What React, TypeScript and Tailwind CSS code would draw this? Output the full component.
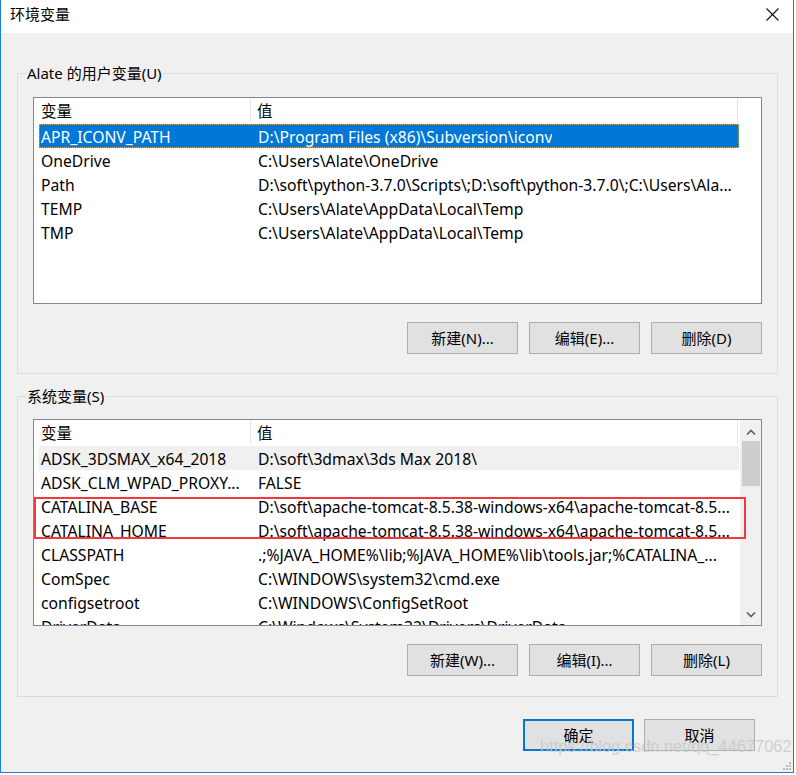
const font = { fontFamily: '"Noto Sans", "Noto Sans CJK SC", sans-serif' };

const userVars = [
  ['APR_ICONV_PATH', 'D:\\Program Files (x86)\\Subversion\\iconv'],
  ['OneDrive', 'C:\\Users\\Alate\\OneDrive'],
  ['Path', 'D:\\soft\\python-3.7.0\\Scripts\\;D:\\soft\\python-3.7.0\\;C:\\Users\\Ala...'],
  ['TEMP', 'C:\\Users\\Alate\\AppData\\Local\\Temp'],
  ['TMP', 'C:\\Users\\Alate\\AppData\\Local\\Temp'],
];

const sysVars = [
  ['ADSK_3DSMAX_x64_2018', 'D:\\soft\\3dmax\\3ds Max 2018\\'],
  ['ADSK_CLM_WPAD_PROXY...', 'FALSE'],
  ['CATALINA_BASE', 'D:\\soft\\apache-tomcat-8.5.38-windows-x64\\apache-tomcat-8.5...'],
  ['CATALINA_HOME', 'D:\\soft\\apache-tomcat-8.5.38-windows-x64\\apache-tomcat-8.5...'],
  ['CLASSPATH', '.;%JAVA_HOME%\\lib;%JAVA_HOME%\\lib\\tools.jar;%CATALINA_...'],
  ['ComSpec', 'C:\\WINDOWS\\system32\\cmd.exe'],
  ['configsetroot', 'C:\\WINDOWS\\ConfigSetRoot'],
  ['DriverData', 'C:\\Windows\\System32\\Drivers\\DriverData'],
];

function Btn({ label, primary }: { label: string; primary?: boolean }) {
  return (
    <div
      className={
        'w-[111px] h-[32px] flex items-center justify-center bg-[#e1e1e1] text-[15px] text-black ' +
        (primary ? 'border-2 border-[#0078d7]' : 'border border-[#adadad]')
      }
    >
      {label}
    </div>
  );
}

function Header({ scroll }: { scroll?: boolean }) {
  return (
    <div className="flex h-[24px] bg-white text-[15.5px] text-black">
      <div className="w-[217px] pl-[7px] pt-[4px] flex items-center border-r border-[#e5e5e5]">变量</div>
      <div className="w-[487px] pl-[6px] pt-[4px] flex items-center border-r border-[#e5e5e5]">值</div>
      {!scroll && <div className="flex-1" />}
    </div>
  );
}

function Rows({ rows, selected, hover }: { rows: string[][]; selected?: number; hover?: number }) {
  return (
    <div className="pt-[2px] pl-[5px] w-[705px]">
      {rows.map(([k, v], i) => {
        const sel = i === selected;
        const hov = i === hover;
        return (
          <div
            key={k}
            className={
              'flex h-[24px] pt-[4px] items-center text-[15.7px] whitespace-nowrap ' +
              (sel
                ? 'bg-[#0078d7] text-white outline outline-1 outline-dotted outline-[#f0a030] -outline-offset-1'
                : hov
                ? 'bg-[#f0f0f0] text-black'
                : 'text-black')
            }
          >
            <div className="w-[217px] pl-[2px] overflow-hidden">{k}</div>
            <div className="pl-[2px] overflow-hidden">{v}</div>
          </div>
        );
      })}
    </div>
  );
}

function Chevron({ up }: { up?: boolean }) {
  return (
    <svg width="10" height="6" viewBox="0 0 10 6">
      <path
        d={up ? 'M1 5.5 L5 1.5 L9 5.5' : 'M1 0.5 L5 4.5 L9 0.5'}
        fill="none"
        stroke="#606060"
        strokeWidth="1.6"
      />
    </svg>
  );
}

export default function App() {
  return (
    <div className="w-[796px] h-[775px] bg-white flex overflow-hidden" style={font}>
      <div className="w-[794px] h-[773px] flex flex-col border-l border-r border-b border-[#1b7fd6] bg-[#f0f0f0] relative">
        {/* title bar */}
        <div className="h-[33px] bg-white flex items-center justify-between pl-[9px] pr-[14px]">
          <span className="text-[15px] text-black -mt-[4px]">环境变量</span>
          <svg width="13" height="13" viewBox="0 0 13 13" className="-mt-[4px]">
            <path d="M0.5 0.5 L12.5 12.5 M12.5 0.5 L0.5 12.5" stroke="#111" strokeWidth="1.1" />
          </svg>
        </div>

        {/* user variables */}
        <fieldset className="ml-[16px] mt-[30px] w-[761px] h-[311px] border border-[#dcdcdc] pl-[15px] pr-[15px]">
          <legend className="ml-[-7px] px-[1px] text-[15px] leading-[20px] text-black">Alate 的用户变量(U)</legend>
          <div className="mt-[14px] h-[207px] border border-[#828790] bg-white">
            <div className="w-[705px]">
              <Header />
            </div>
            <Rows rows={userVars} selected={0} />
          </div>
          <div className="mt-[18px] flex justify-end gap-[11px]">
            <Btn label="新建(N)..." />
            <Btn label="编辑(E)..." />
            <Btn label="删除(D)" />
          </div>
        </fieldset>

        {/* system variables */}
        <fieldset className="ml-[16px] mt-[12px] w-[761px] h-[311px] border border-[#dcdcdc] pl-[15px] pr-[15px]">
          <legend className="ml-[-7px] px-[1px] text-[15px] leading-[20px] text-black">系统变量(S)</legend>
          <div className="mt-[13px] h-[207px] border border-[#828790] bg-white flex overflow-hidden relative">
            <div className="w-[706px] overflow-hidden">
              <Header scroll />
              <Rows rows={sysVars} hover={0} />
            </div>
            <div className="ml-auto w-[21px] bg-[#f0f0f0] flex flex-col items-center">
              <div className="h-[21px] flex items-center justify-center pt-[2px]">
                <Chevron up />
              </div>
              <div className="w-[18px] h-[45px] bg-[#cdcdcd]" />
              <div className="flex-1" />
              <div className="h-[21px] flex items-center justify-center">
                <Chevron />
              </div>
            </div>
            {/* annotation */}
            <div className="absolute left-0 top-[77px] w-[712px] h-[42px] border-2 border-[#f5383b]" />
          </div>
          <div className="mt-[18px] flex justify-end gap-[11px]">
            <Btn label="新建(W)..." />
            <Btn label="编辑(I)..." />
            <Btn label="删除(L)" />
          </div>
        </fieldset>

        {/* dialog buttons */}
        <div className="mt-[22px] flex justify-end gap-[10px] pr-[38px]">
          <Btn label="确定" primary />
          <Btn label="取消" />
        </div>

        {/* watermark */}
        <div
          className="absolute left-[539px] top-[734px] text-[16.4px] text-[#c8c8c8] opacity-80 whitespace-nowrap"
          style={{ fontFamily: '"Liberation Sans", Arial, sans-serif' }}
        >
          https://blog.csdn.net/qq_44677062
        </div>
        {/* size grip */}
        <div className="absolute right-[2px] bottom-[2px] grid grid-cols-3 gap-[1px]">
          <div className="w-[2px] h-[2px]" />
          <div className="w-[2px] h-[2px]" />
          <div className="w-[2px] h-[2px] bg-[#bcbcbc]" />
          <div className="w-[2px] h-[2px]" />
          <div className="w-[2px] h-[2px] bg-[#bcbcbc]" />
          <div className="w-[2px] h-[2px] bg-[#bcbcbc]" />
          <div className="w-[2px] h-[2px] bg-[#bcbcbc]" />
          <div className="w-[2px] h-[2px] bg-[#bcbcbc]" />
          <div className="w-[2px] h-[2px] bg-[#bcbcbc]" />
        </div>
      </div>
    </div>
  );
}
